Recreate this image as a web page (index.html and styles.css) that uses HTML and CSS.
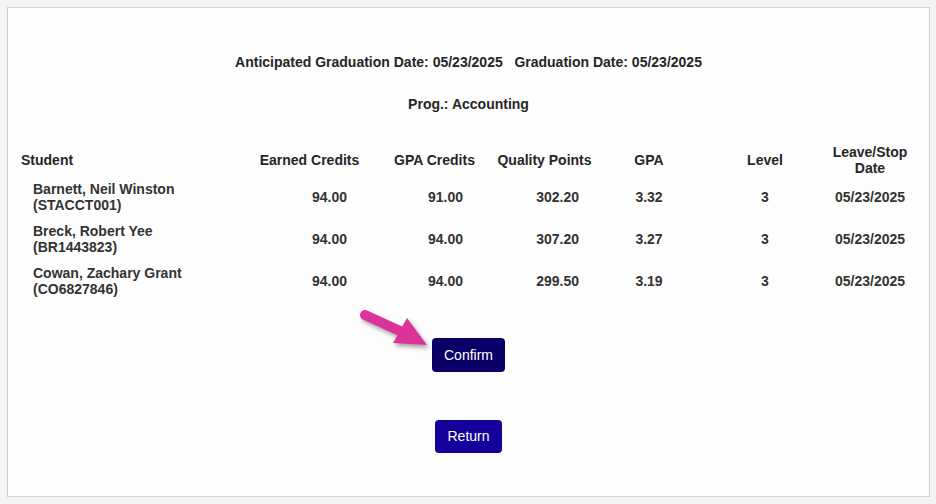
FILE: index.html
```html
<!DOCTYPE html>
<html lang="en">
<head>
<meta charset="utf-8">
<title>Graduation Confirmation</title>
<link rel="stylesheet" href="styles.css">
</head>
<body>
<div class="panel">
  <div class="title">Anticipated Graduation Date: 05/23/2025&nbsp;&nbsp;&nbsp;Graduation Date: 05/23/2025</div>
  <div class="prog">Prog.: Accounting</div>
  <table class="grid">
    <colgroup>
      <col class="c-student">
      <col class="c-earned">
      <col class="c-gpacred">
      <col class="c-qp">
      <col class="c-gpa">
      <col class="c-level">
      <col class="c-date">
    </colgroup>
    <thead>
      <tr>
        <th class="h-student">Student</th>
        <th>Earned Credits</th>
        <th>GPA Credits</th>
        <th>Quality Points</th>
        <th>GPA</th>
        <th>Level</th>
        <th>Leave/Stop Date</th>
      </tr>
    </thead>
    <tbody>
      <tr>
        <td class="name">Barnett, Neil Winston<br>(STACCT001)</td>
        <td class="n-earned">94.00</td>
        <td class="n-gpacred">91.00</td>
        <td class="n-qp">302.20</td>
        <td class="ctr">3.32</td>
        <td class="ctr">3</td>
        <td class="ctr">05/23/2025</td>
      </tr>
      <tr>
        <td class="name">Breck, Robert Yee<br>(BR1443823)</td>
        <td class="n-earned">94.00</td>
        <td class="n-gpacred">94.00</td>
        <td class="n-qp">307.20</td>
        <td class="ctr">3.27</td>
        <td class="ctr">3</td>
        <td class="ctr">05/23/2025</td>
      </tr>
      <tr>
        <td class="name">Cowan, Zachary Grant<br>(CO6827846)</td>
        <td class="n-earned">94.00</td>
        <td class="n-gpacred">94.00</td>
        <td class="n-qp">299.50</td>
        <td class="ctr">3.19</td>
        <td class="ctr">3</td>
        <td class="ctr">05/23/2025</td>
      </tr>
    </tbody>
  </table>
  <div class="actions">
    <div class="confirm-wrap">
      <svg class="pointer" width="76" height="46" viewBox="0 0 76 46" aria-hidden="true">
        <line x1="7" y1="9" x2="42" y2="25" stroke="#dd3399" stroke-width="10" stroke-linecap="round"/>
        <polygon points="49,12 35,37 69,39" fill="#dd3399"/>
      </svg>
      <button class="btn btn-confirm" type="button">Confirm</button>
    </div>
    <button class="btn btn-return" type="button">Return</button>
  </div>
</div>
</body>
</html>
```

FILE: styles.css
```css
html, body {
  margin: 0;
  padding: 0;
}
body {
  background: #f4f4f4;
  font-family: "Liberation Sans", Arial, sans-serif;
  color: #333;
  font-size: 14px;
}
.panel {
  margin: 7px 6px 7px 7px;
  box-sizing: border-box;
  height: 490px;
  background: #fdfdfd;
  border: 1px solid #cfcfcf;
  padding: 0 0 0 7px;
}
.title {
  margin-top: 46px;
  text-align: center;
  font-weight: bold;
  line-height: 16px;
  color: #262626;
  padding-right: 7px;
}
.prog {
  margin-top: 26px;
  text-align: center;
  font-weight: bold;
  line-height: 16px;
  color: #262626;
  padding-right: 7px;
}
.grid {
  margin-top: 30px;
  border-collapse: collapse;
  table-layout: fixed;
  width: 894px;
}
.c-student { width: 225px; }
.c-earned { width: 139px; }
.c-gpacred { width: 111px; }
.c-qp { width: 109px; }
.c-gpa { width: 100px; }
.c-level { width: 132px; }
.c-date { width: 78px; }
.grid th {
  font-weight: bold;
  line-height: 16px;
  padding: 2px 0 0 0;
  text-align: center;
  vertical-align: middle;
  color: #262626;
}
.grid th.h-student {
  text-align: left;
  padding-left: 6px;
}
.grid td {
  font-weight: bold;
  line-height: 16px;
  padding: 5px 0;
  vertical-align: middle;
  color: #333;
}
.grid td.name {
  padding-left: 18px;
}
.grid td.n-earned { text-align: right; padding-right: 32px; }
.grid td.n-gpacred { text-align: right; padding-right: 27px; }
.grid td.n-qp { text-align: right; padding-right: 20px; }
.grid td.ctr { text-align: center; }
.actions {
  margin-top: 36px;
  display: flex;
  flex-direction: column;
  align-items: center;
  gap: 48px;
  padding-right: 7px;
}
.confirm-wrap {
  position: relative;
}
.pointer {
  position: absolute;
  left: -74px;
  top: -32px;
  filter: drop-shadow(2px 3px 2px rgba(0, 0, 0, 0.35));
}
.btn {
  display: block;
  border: none;
  border-radius: 4px;
  color: #fff;
  font-family: "Liberation Sans", Arial, sans-serif;
  font-size: 14px;
  line-height: 16px;
  padding: 9px 12px;
  margin: 0;
  cursor: pointer;
}
.btn-confirm {
  background: #0b0068;
}
.btn-return {
  background: #14009b;
  padding: 8px 12px 9px;
}
```
